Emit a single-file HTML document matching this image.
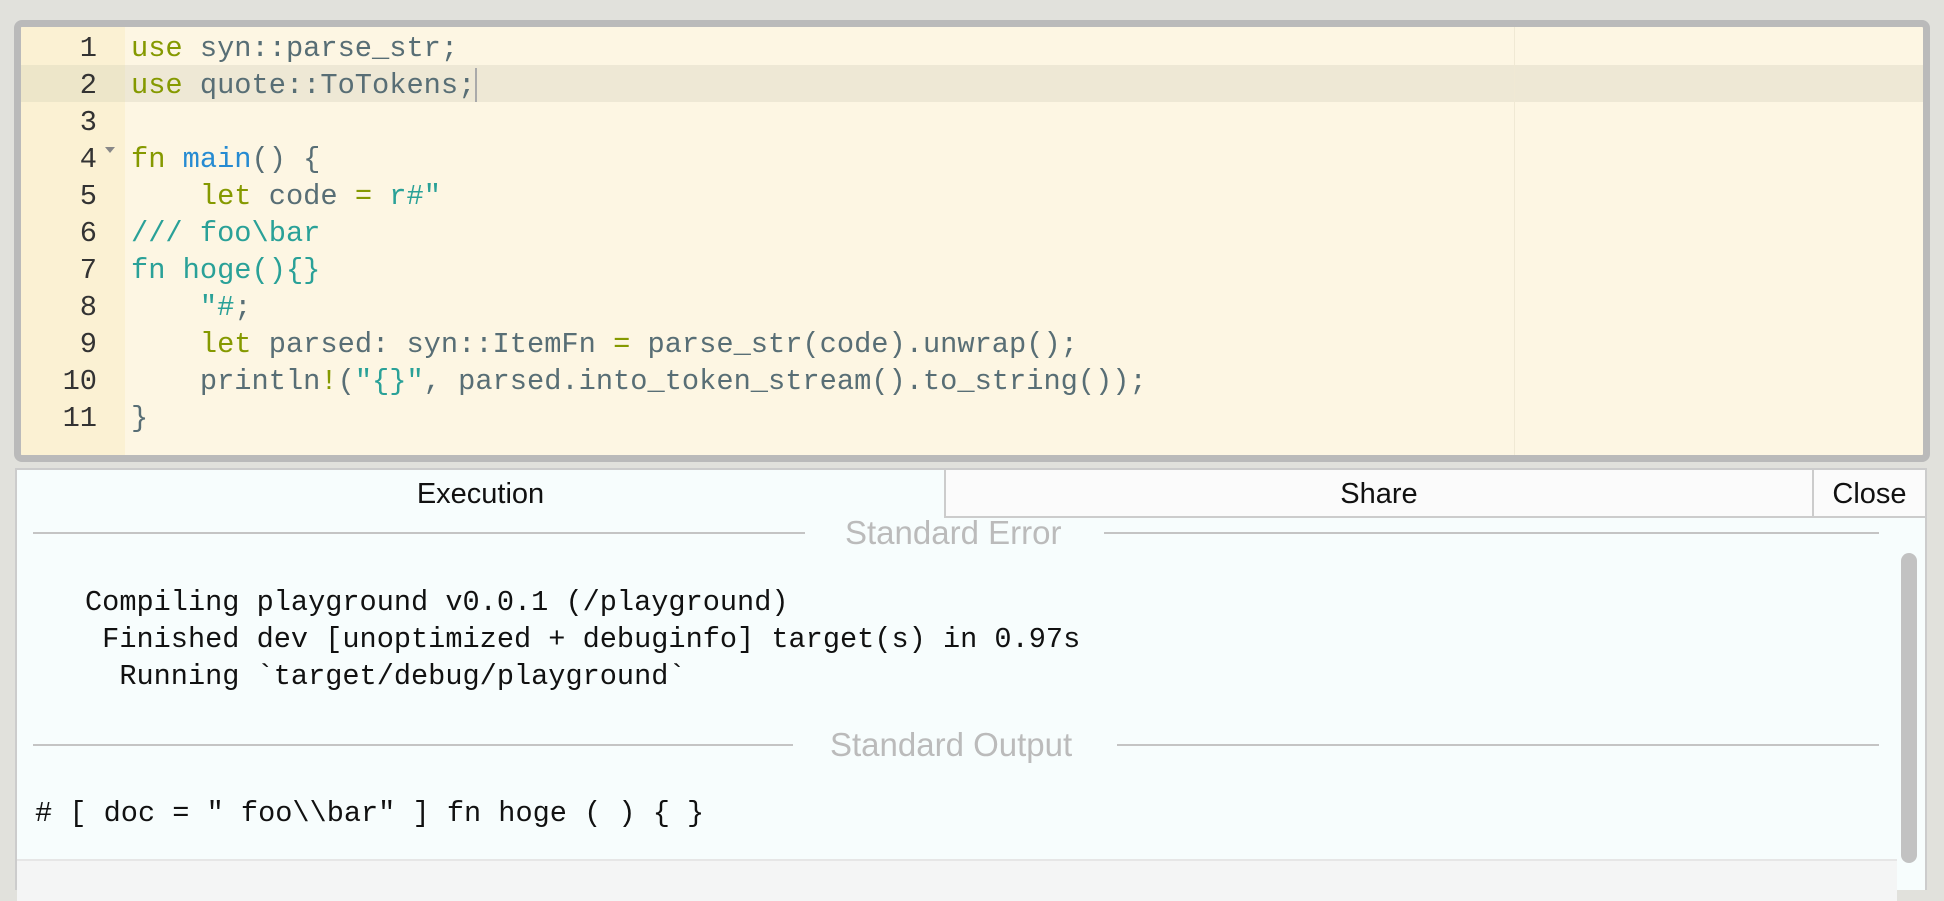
<!DOCTYPE html>
<html><head><meta charset="utf-8"><style>
body{margin:0;width:1944px;height:884px;background:#e1e1dc;position:relative;overflow:hidden;font-family:"Liberation Sans",sans-serif}
.ed{position:absolute;left:14px;top:20px;width:1902px;height:428px;border:7px solid #bababa;border-radius:8px;background:#fdf6e3;overflow:hidden}
.gut{position:absolute;left:0;top:0;width:104px;height:100%;background:#fbf1d3}
.pm{position:absolute;left:1493px;top:0;width:1px;height:100%;background:#f0e9d4}
.hl{position:absolute;left:0;top:38px;width:100%;height:37px;background:#eee8d5}
.hlg{position:absolute;left:0;top:38px;width:104px;height:37px;background:#ede6c9}
.ln,.code{position:absolute;top:3px;font-family:"Liberation Mono",monospace;font-size:28.7px;line-height:37px;white-space:pre}
.ln{left:0;width:76px;text-align:right;color:#333}
.code{left:110px;color:#586e75}
.k{color:#859900}.f{color:#268bd2}.s{color:#2aa198}
.cur{display:inline-block;width:2px;height:34px;background:#aaa;vertical-align:middle}
.fold{position:absolute;left:84px;top:120px;width:0;height:0;border-left:5px solid transparent;border-right:5px solid transparent;border-top:6px solid #888}
.panel{position:absolute;left:15px;top:468px;width:1908px;height:420px;background:#f7fdfd;border:2px solid #ccc;border-bottom:none}
.tab{position:absolute;top:0;height:48px;line-height:48px;text-align:center;font-size:29px;color:#111;box-sizing:border-box}
.hdr{position:absolute;font-size:33px;color:#bbb}
.rule{position:absolute;height:2px;background:#c4c4c4}
.out{position:absolute;font-family:"Liberation Mono",monospace;font-size:28.6px;line-height:37px;white-space:pre;color:#111}
</style></head><body>
<div class="ed">
<div class="gut"></div><div class="hl"></div><div class="hlg"></div><div class="pm"></div>
<div class="fold"></div>
<div class="ln">1
2
3
4
5
6
7
8
9
10
11</div>
<div class="code"><span class="k">use</span> syn::parse_str;
<span class="k">use</span> quote::ToTokens;<span class="cur"></span>

<span class="k">fn</span> <span class="f">main</span>() {
    <span class="k">let</span> code <span class="k">=</span> <span class="s">r#"</span>
<span class="s">/// foo\bar</span>
<span class="s">fn hoge(){}</span>
<span class="s">    "#</span>;
    <span class="k">let</span> parsed: syn::ItemFn <span class="k">=</span> parse_str(code).unwrap();
    println<span class="k">!</span>(<span class="s">"{}"</span>, parsed.into_token_stream().to_string());
}</div>
</div>
<div class="panel">
<div class="tab" style="left:0;width:927px">Execution</div>
<div class="tab" style="left:927px;width:868px;background:#fbfbfb;border-left:2px solid #ccc;border-bottom:2px solid #ccc">Share</div>
<div class="tab" style="left:1795px;width:113px;background:#fbfbfb;border-left:2px solid #ccc;border-bottom:2px solid #ccc">Close</div>
<div class="rule" style="left:16px;top:62px;width:772px"></div>
<div class="hdr" style="left:828px;top:44px">Standard Error</div>
<div class="rule" style="left:1087px;top:62px;width:775px"></div>
<div class="out" style="left:68px;top:114px">Compiling playground v0.0.1 (/playground)
 Finished dev [unoptimized + debuginfo] target(s) in 0.97s
  Running `target/debug/playground`</div>
<div class="rule" style="left:16px;top:274px;width:760px"></div>
<div class="hdr" style="left:813px;top:256px">Standard Output</div>
<div class="rule" style="left:1100px;top:274px;width:762px"></div>
<div class="out" style="left:18px;top:325px"># [ doc = " foo\\bar" ] fn hoge ( ) { }</div>
<div style="position:absolute;left:0;top:389px;width:1880px;height:40px;background:#f4f5f5;border-top:2px solid #e6e6e6"></div>
<div style="position:absolute;left:1884px;top:83px;width:16px;height:310px;border-radius:8px;background:#c2c2c2"></div>
</div>
</body></html>
